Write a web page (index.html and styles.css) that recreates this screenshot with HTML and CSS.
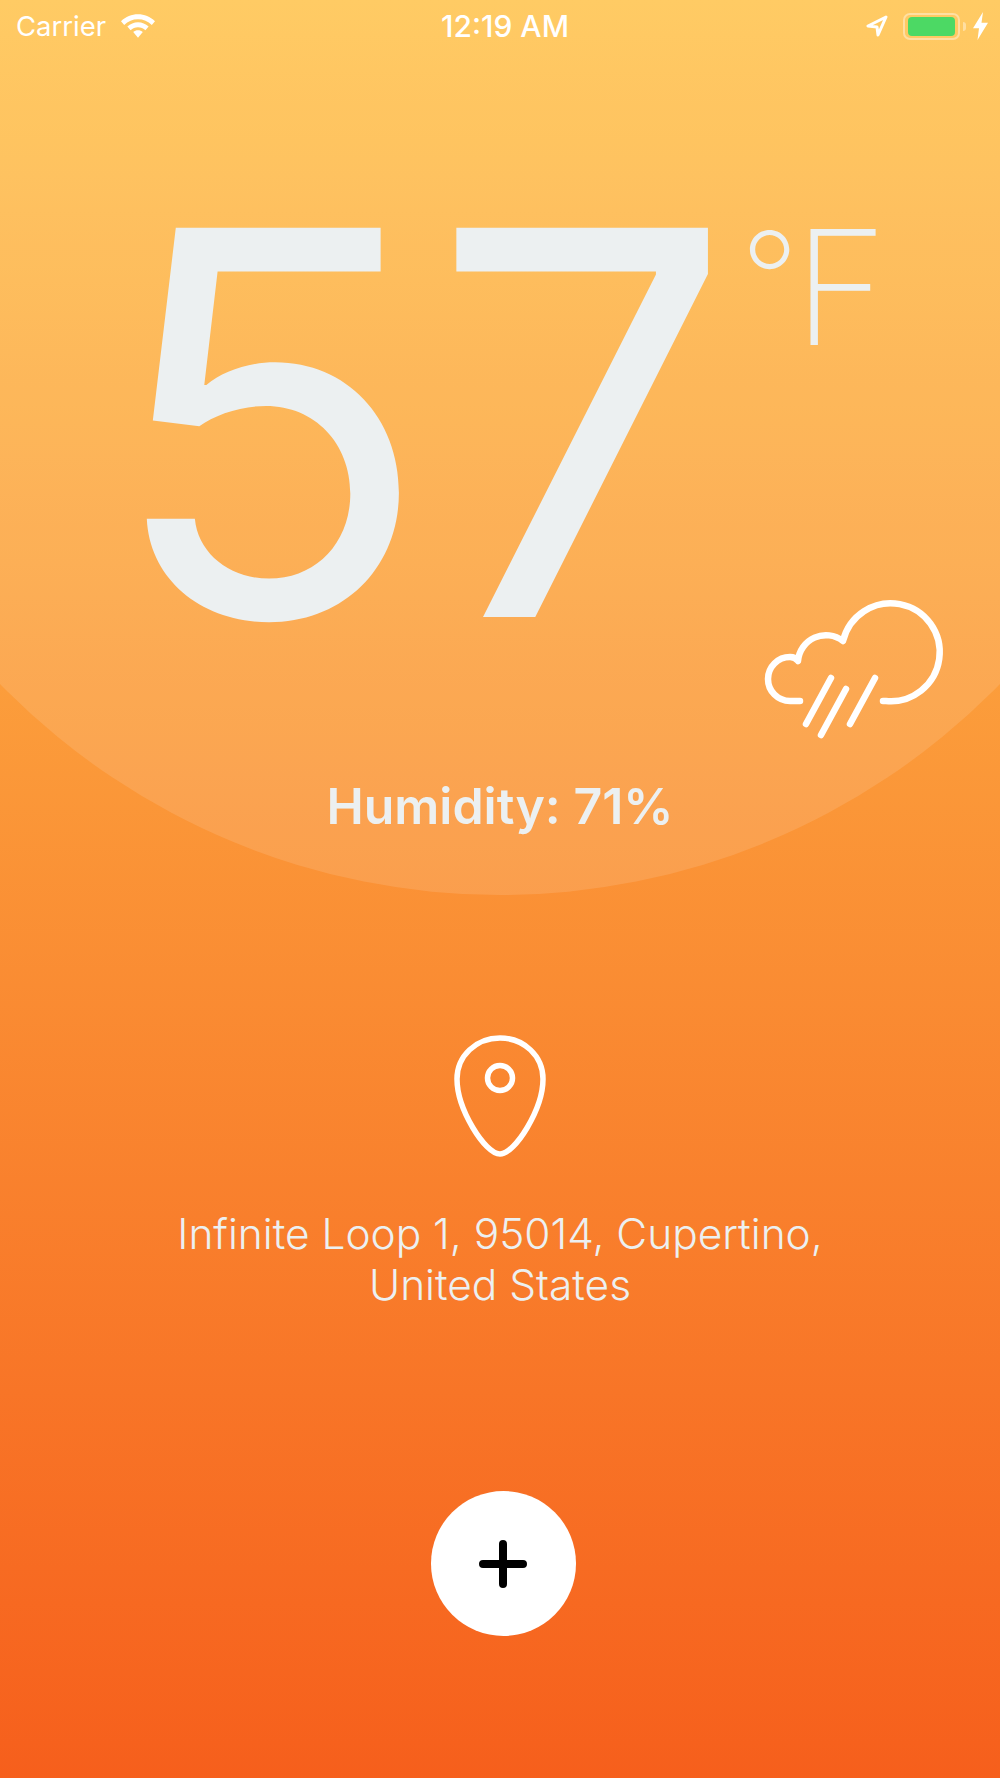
FILE: index.html
```html
<!DOCTYPE html>
<html>
<head>
    <title>Weather</title>
    <link rel="stylesheet" href="styles.css">
</head>
<body>
    <div class="screen">
        <div class="arc"></div>

        <div class="status-bar">
            <div class="status-left">
                <span class="carrier">Carrier</span>
                <svg class="wifi" viewBox="0 0 32 22">
                    <path d="M16 0C10 0 4.500 2.300 0 6.500L3 10C6.600 6.600 11 4.700 16 4.700S25.400 6.600 29 10L32 6.500C27.500 2.300 22 0 16 0Z"/>
                    <path d="M16 7.500C12.200 7.500 8.800 9 6 11.500L9 15C11 13.200 13.300 12.200 16 12.200S21 13.200 23 15L26 11.500C23.200 9 19.800 7.500 16 7.500Z"/>
                    <path d="M16 15C14.300 15 12.800 15.600 11.500 16.700L16 22L20.500 16.700C19.200 15.600 17.700 15 16 15Z"/>
                </svg>
            </div>
            <span class="time">12:19 AM</span>
            <div class="status-right">
                <svg class="arrow" viewBox="0 0 22 22">
                    <path d="M20 2L2 11L11 12L12 20Z"/>
                </svg>
                <div class="battery"><div class="battery-fill"></div></div>
                <div class="battery-nub"></div>
                <svg class="bolt" viewBox="0 0 15 26" preserveAspectRatio="none">
                    <path d="M10 0L0 15H6L4.500 26L15 10H8.500Z"/>
                </svg>
            </div>
        </div>

        <div class="temp">
            <span class="temp-value">57</span>
            <span class="temp-degree">°</span>
            <span class="temp-unit">F</span>
        </div>

        <div class="cloud-row">
            <svg class="cloud" viewBox="760 595 190 145">
                <path d="M802 700H792A22 22 0 0 1 792 656C795 656 798 657 800 660A28 28 0 0 1 845 640A49 49 0 1 1 888 700H885"/>
                <path d="M833 677L808 723"/>
                <path d="M848 688L823 734"/>
                <path d="M877 677L852 723"/>
            </svg>
        </div>

        <p class="humidity">Humidity: 71%</p>

        <svg class="pin" viewBox="450 1030 100 132">
            <path d="M500 1039C524 1039 543 1057 543 1080C543 1110 515 1155 500 1155C485 1155 457 1110 457 1080C457 1057 476 1039 500 1039Z"/>
            <circle cx="500" cy="1079" r="12.500"/>
        </svg>

        <p class="address">Infinite Loop 1, 95014, Cupertino,<br>United States</p>

        <div class="add-button">
            <svg class="plus" viewBox="0 0 50 50">
                <path d="M25 5V45M5 25H45"/>
            </svg>
        </div>
    </div>
</body>
</html>
```

FILE: styles.css
```css
html, body {
    margin: 0;
    padding: 0;
}

body {
    font-family: Inter, "Liberation Sans", sans-serif;
}

.screen {
    position: relative;
    width: 1000px;
    height: 1778px;
    overflow: hidden;
    display: flex;
    flex-direction: column;
    align-items: center;
    background: linear-gradient(#ffc44f, #f65f1c);
    color: #ecf0f1;
}

.arc {
    position: absolute;
    left: -198px;
    top: -501px;
    width: 1396px;
    height: 1396px;
    border-radius: 50%;
    background: rgba(255, 255, 255, 0.12);
}

.status-bar {
    position: relative;
    width: 100%;
    height: 52px;
    box-sizing: border-box;
    padding: 0 12px 0 16px;
    display: flex;
    justify-content: space-between;
    align-items: center;
    color: #fff;
}

.status-left, .status-right {
    display: flex;
    align-items: center;
    width: 170px;
}

.status-right {
    justify-content: flex-end;
}

.carrier {
    font-size: 27.500px;
}

.wifi {
    width: 34px;
    height: 24px;
    margin-left: 15px;
    fill: #fff;
}

.time {
    font-size: 30px;
    font-weight: 500;
    margin-left: 6px;
}

.arrow {
    width: 22px;
    height: 22px;
    fill: none;
    stroke: #fff;
    stroke-width: 3;
    stroke-linejoin: round;
    margin-right: 15px;
}

.battery {
    width: 57px;
    height: 27px;
    box-sizing: border-box;
    border: 2px solid rgba(255, 255, 255, 0.4);
    border-radius: 7px;
    padding: 2px 3px;
}

.battery-fill {
    height: 100%;
    background: #4cd964;
    border-radius: 4px;
}

.battery-nub {
    width: 3px;
    height: 9px;
    margin-left: 3px;
    background: rgba(255, 255, 255, 0.4);
    border-radius: 0 3px 3px 0;
}

.bolt {
    width: 15px;
    height: 28px;
    fill: #fff;
    margin-left: 7px;
}

.temp {
    position: relative;
    display: flex;
    align-items: flex-start;
    height: 482px;
    margin-top: 130px;
    margin-left: -7px;
}

.temp-value {
    font-size: 535px;
    font-weight: 400;
    line-height: 482px;
}

.temp-degree {
    font-size: 128px;
    font-weight: 150;
    line-height: 112px;
    margin-top: 40px;
    margin-left: 7px;
}

.temp-unit {
    font-size: 160px;
    font-weight: 250;
    line-height: 140px;
    margin-top: 35px;
    margin-left: -5px;
}

.cloud-row {
    position: relative;
    width: 100%;
    display: flex;
    justify-content: flex-end;
    padding-right: 52px;
    box-sizing: border-box;
    margin-top: -68px;
}

.cloud {
    width: 190px;
    height: 145px;
    fill: none;
    stroke: #fff;
    stroke-width: 6.500;
    stroke-linecap: round;
    stroke-linejoin: round;
}

.humidity {
    position: relative;
    margin: 37px 0 0;
    font-size: 50px;
    font-weight: 600;
    line-height: 56px;
}

.pin {
    position: relative;
    width: 100px;
    height: 132px;
    margin-top: 195px;
    fill: none;
    stroke: #fff;
    stroke-width: 5.500;
}

.address {
    margin: 47px 0 0;
    font-size: 42.400px;
    font-weight: 300;
    line-height: 51px;
    text-align: center;
}

.add-button {
    width: 145px;
    height: 145px;
    margin-top: 181px;
    margin-left: 6px;
    border-radius: 50%;
    background: #fff;
    display: flex;
    align-items: center;
    justify-content: center;
}

.plus {
    width: 50px;
    height: 50px;
    fill: none;
    stroke: #000;
    stroke-width: 8;
    stroke-linecap: round;
}
```
